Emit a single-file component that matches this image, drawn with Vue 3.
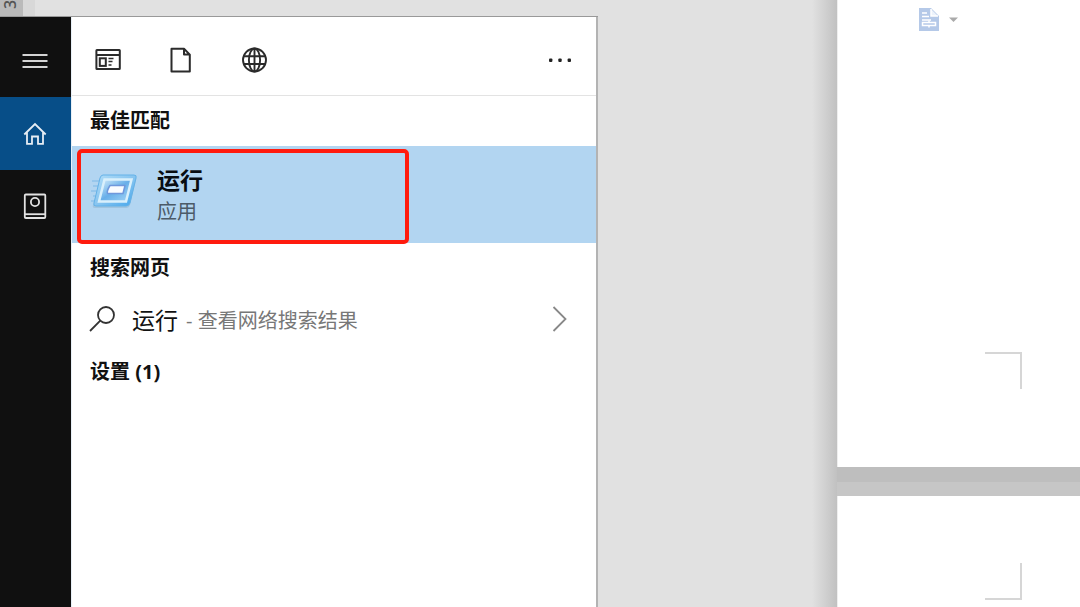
<script setup>
const filters = [
  { id: 'apps', label: '应用' },
  { id: 'docs', label: '文档' },
  { id: 'web', label: '网页' },
]
</script>

<template>
  <div class="desktop">
    <div class="search">
      <div class="ruler"><span class="ruler-cell"><span class="ruler-mark">3</span></span><span class="ruler-edge"></span></div>
      <div class="window">
        <nav class="rail">
          <button class="rail-item" aria-label="菜单">
            <svg width="26" height="18" viewBox="0 0 26 18" fill="none" stroke="#d4d4d4" stroke-width="2">
              <path d="M0.500 3H25.500M0.500 9H25.500M0.500 15H25.500" />
            </svg>
          </button>
          <button class="rail-item active" aria-label="主页">
            <svg width="26" height="26" viewBox="0 0 26 26" fill="none" stroke="#e6edf4" stroke-width="1.800">
              <path d="M2.300 13.500L13 3L23.700 13.500M5 11V22.800H10V15.500H16V22.800H21V11" />
            </svg>
          </button>
          <button class="rail-item" aria-label="笔记本">
            <svg width="26" height="28" viewBox="0 0 26 28" fill="none" stroke="#e2e2e2" stroke-width="1.800">
              <rect x="2.800" y="1.500" width="20.500" height="23.500" rx="1" />
              <path d="M3 21.200H23" />
              <circle cx="13" cy="9" r="4.100" />
            </svg>
          </button>
        </nav>
        <main class="panel">
          <div class="toolbar">
            <button v-for="f in filters" :key="f.id" class="tool" :aria-label="f.label">
              <svg v-if="f.id === 'apps'" width="28" height="28" viewBox="0 0 28 28" fill="none" stroke="#2b2b2b" stroke-width="2">
                <rect x="2.400" y="4" width="23.400" height="19" rx="0.500" />
                <path d="M2.400 9H25.800" />
                <rect x="5.800" y="12.300" width="6" height="7.600" />
                <path d="M14.500 12.500H19.500M14.500 15.500H18.500M14.500 19H17.500" stroke-width="1.500" />
              </svg>
              <svg v-else-if="f.id === 'docs'" width="28" height="28" viewBox="0 0 28 28" fill="none" stroke="#2b2b2b" stroke-width="2" stroke-linejoin="round">
                <path d="M4.500 2.800H17L22.800 8.600V25.500H4.500ZM17 2.800V8.600H22.800" />
              </svg>
              <svg v-else width="28" height="28" viewBox="0 0 28 28" fill="none" stroke="#2b2b2b" stroke-width="1.900">
                <circle cx="14.500" cy="14" r="11.500" />
                <ellipse cx="14.500" cy="14" rx="5.600" ry="11.500" />
                <path d="M3.800 10.200H25.200M3.800 18H25.200M14.500 2.500V25.500" />
              </svg>
            </button>
            <button class="tool more" aria-label="更多">
              <svg width="28" height="28" viewBox="0 0 28 28" fill="#222">
                <rect x="3" y="12.500" width="3.400" height="3.400" rx="1" /><rect x="12.300" y="12.500" width="3.400" height="3.400" rx="1" /><rect x="21.600" y="12.500" width="3.400" height="3.400" rx="1" />
              </svg>
            </button>
          </div>
          <h2 class="heading">最佳匹配</h2>
          <div class="best">
            <button class="match">
              <svg class="run-icon" width="50" height="40" viewBox="0 0 50 40">
                <defs>
                  <linearGradient id="frame" x1="0" y1="0" x2="1" y2="1">
                    <stop offset="0" stop-color="#b2def8" /><stop offset="0.500" stop-color="#88c5f0" /><stop offset="1" stop-color="#43a5ec" />
                  </linearGradient>
                  <linearGradient id="inner" x1="0" y1="0" x2="1" y2="1">
                    <stop offset="0" stop-color="#d9effb" /><stop offset="0.500" stop-color="#68afe9" /><stop offset="1" stop-color="#a5d6f7" />
                  </linearGradient>
                </defs>
                <path d="M3 10H14M4 15H12M2 20H10M4 25H9M2 30H7" stroke="#7cb9e8" stroke-width="1.200" />
                <path d="M14 6H45Q48 6 47 9L41 34Q40 37 37 37H6Q3 37 4 34L11 9Q12 6 14 6Z" fill="#85a9c6" opacity="0.400" />
                <path d="M14 4H45Q48 4 47 7L41 32Q40 35 37 35H7Q4 35 5 32L11 7Q12 4 14 4Z" fill="url(#frame)" stroke="#65b2e8" />
                <path d="M15.500 8.500H42.500L37 30.500H10Z" fill="url(#inner)" stroke="#d9f0fc" stroke-width="2.500" />
                <path d="M21 14.500H36L34 22.500H18.500Q17.500 20 21 14.500Z" fill="#fafcff" stroke="#7098dc" stroke-width="1.500" stroke-linejoin="round" />
              </svg>
              <span class="match-text"><strong>运行</strong><span>应用</span></span>
            </button>
          </div>
          <h2 class="heading">搜索网页</h2>
          <button class="web">
            <svg width="28" height="28" viewBox="0 0 28 28" fill="none" stroke="#333" stroke-width="1.800">
              <circle cx="18" cy="10" r="8" /><path d="M12.300 15.700L2 26" />
            </svg>
            <span class="query">运行</span>
            <span class="hint">- 查看网络搜索结果</span>
            <svg class="chevron" width="16" height="28" viewBox="0 0 16 28" fill="none" stroke="#888" stroke-width="1.800">
              <path d="M1.500 2L13.500 14L1.500 26" />
            </svg>
          </button>
          <h2 class="heading">设置 (1)</h2>
        </main>
      </div>
    </div>
    <div class="document">
      <section class="page upper">
        <button class="paste" aria-label="粘贴选项">
          <svg width="42" height="26" viewBox="0 0 42 26">
            <path d="M1 1H13L21 9V24H1Z" fill="#b5c9e8" />
            <path d="M13 2V9H20" fill="#edf3fb" stroke="#fff" stroke-width="1.500" />
            <path d="M4 6H9M4 9.500H11M4 13H13" stroke="#fff" stroke-width="1.500" />
            <path d="M4.500 15.500H17.500V18.500H4.500ZM11 13.500V15.500M11 18.500V20.500" fill="none" stroke="#fff" stroke-width="1.500" />
            <path d="M31 10.500H40L35.500 15Z" fill="#aaa" />
          </svg>
        </button>
        <div class="crop bottom"></div>
      </section>
      <div class="page-gap"></div>
      <section class="page lower"><div class="crop top"></div></section>
    </div>
  </div>
</template>

<style>
body { margin: 0; background: #e1e1e1; }
</style>

<style scoped>
* { box-sizing: border-box; }
.desktop {
  display: flex;
  justify-content: space-between;
  min-height: 100vh;
  overflow: hidden;
  background: #e1e1e1;
  font-family: "Open Sans", "Noto Sans CJK SC", sans-serif;
  color: #111;
}
button { border: 0; padding: 0; margin: 0; background: none; font: inherit; color: inherit; text-align: left; }
svg { display: block; flex: none; }
.search { display: flex; flex-direction: column; flex: 0 0 598px; }
.ruler { display: flex; height: 16px; overflow: hidden; }
.ruler-cell { display: flex; justify-content: center; width: 23px; padding-right: 4px; background: #bababa; }
.ruler-mark { writing-mode: vertical-rl; transform: rotate(180deg); height: 9px; font-size: 16px; line-height: 20px; font-weight: 600; color: #555; }
.ruler-edge { width: 12px; background: #d8d8d8; }
.window { display: flex; flex: 1; border-top: 1px solid #999; }
.rail { width: 71px; background: #101010; padding-top: 7px; }
.rail-item { display: flex; align-items: center; justify-content: center; width: 100%; height: 73px; padding-right: 2px; }
.rail-item.active { background: #074e88; }
.panel { flex: 1; border-right: 2px solid #b3b3b3; background: #fff; border-left: 1px solid #e8f0f7; }
.toolbar { display: flex; align-items: center; gap: 45px; height: 79px; padding: 7px 22px 0; border-bottom: 1px solid #e3e3e3; }
.more { margin-left: auto; }
.heading { margin: 0; padding-left: 18px; height: 50px; font-size: 20px; line-height: 50px; font-weight: 700; }
.best { height: 97px; padding: 3px 5px 0; background: #b2d5f1; }
.match { display: flex; align-items: center; width: 332px; max-width: 100%; height: 95px; border: 4px solid #ff1b0e; border-radius: 5px; padding-left: 8px; gap: 18px; }
.run-icon { margin-bottom: 12px; }
.match-text { display: flex; flex-direction: column; padding-bottom: 2px; font-size: 20px; line-height: 32px; color: #4c5b68; }
.match-text strong { font-size: 23px; color: #080d12; }
.web { display: flex; align-items: center; width: 100%; height: 54px; padding: 0 28px 2px 16px; }
.query { margin-left: 16px; font-size: 23px; }
.hint { margin-left: 8px; font-size: 20px; color: #777; }
.chevron { margin-left: auto; }
.document { display: flex; flex-direction: column; flex: 0 1 268px; padding-left: 25px; background: linear-gradient(90deg, #e1e1e1, #c1c1c1 25px); }
.page { display: flex; flex-direction: column; background: #fff; border-left: 1px solid #eee; }
.upper { height: 467px; padding: 7px 58px 78px 80px; justify-content: space-between; }
.page-gap { height: 29px; background: linear-gradient(#bebebe 50%, #c6c6c6 50%); }
.lower { flex: 1; padding: 67px 58px 0; }
.crop { width: 37px; height: 37px; align-self: flex-end; border-right: 2px solid #d6d6d6; }
.bottom { border-top: 2px solid #d6d6d6; }
.top { border-bottom: 2px solid #d6d6d6; }
</style>
